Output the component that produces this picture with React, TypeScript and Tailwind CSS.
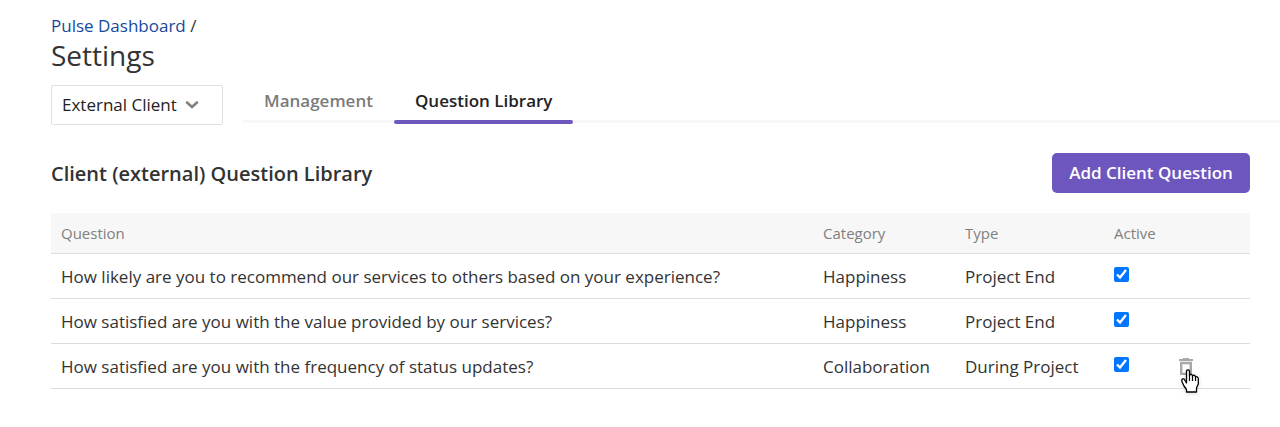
import { useState } from "react";

type Question = {
  id: number;
  text: string;
  category: string;
  type: string;
  removable?: boolean;
};

const QUESTIONS: Question[] = [
  {
    id: 1,
    text: "How likely are you to recommend our services to others based on your experience?",
    category: "Happiness",
    type: "Project End",
  },
  {
    id: 2,
    text: "How satisfied are you with the value provided by our services?",
    category: "Happiness",
    type: "Project End",
  },
  {
    id: 3,
    text: "How satisfied are you with the frequency of status updates?",
    category: "Collaboration",
    type: "During Project",
    removable: true,
  },
];

function TrashIcon() {
  return (
    <svg viewBox="0 0 14 17" className="h-[17px] w-[14px]" aria-hidden="true">
      <path d="M4 0h6v1h4v2H0V1h4z" fill="#a8a8a8" />
      <path d="M2.200 5h9.600v11H2.200z" fill="none" stroke="#a8a8a8" strokeWidth="2.400" />
    </svg>
  );
}

function HandCursor() {
  return (
    <svg
      viewBox="0 0 18 24"
      className="pointer-events-none absolute top-[11px] left-0.5 h-6 w-[18px] drop-shadow-sm"
      aria-hidden="true"
    >
      <path
        d="M5.500 14V2.500Q5.500 .8 7 .8t1.500 1.700V6.500Q9.500 5 10.500 5.500T11.500 7Q12.500 5.800 13.500 6.300T14.500 8Q15.500 7.300 16.400 8T17.300 10V15L15.500 19V23H5.500V20.500L3 17L.9 12.500Q.5 10 2 9.800T4 11.500Z"
        fill="#fff"
        stroke="#000"
        strokeWidth="1.300"
        strokeLinejoin="round"
      />
      <path d="M8.500 6v6M11.500 7v5M14.500 8v4" fill="none" stroke="#000" strokeWidth="1.200" />
    </svg>
  );
}

function ClientSelect() {
  return (
    <div className="relative w-[172px] shrink-0">
      <select
        aria-label="Client type"
        className="h-10 w-full appearance-none rounded-xs border border-[#e0e0e0] bg-white px-[10px] text-[#222]"
      >
        <option>External Client</option>
        <option>Internal Client</option>
      </select>
      <svg
        viewBox="0 0 14 8"
        className="pointer-events-none absolute top-4 right-6 h-2 w-[14px]"
        aria-hidden="true"
      >
        <path d="M2 1.500l5 4.500 5-4.500" fill="none" stroke="#808080" strokeWidth="2.600" strokeLinecap="round" />
      </svg>
    </div>
  );
}

function Tabs() {
  return (
    <nav className="ml-5 flex h-[38px] flex-1 border-b-3 border-[#f7f7f7] font-semibold">
      <button className="h-[39px] px-[21px] pb-2 text-[#7b7b7b]">Management</button>
      <button className="relative h-[39px] px-[21px] pb-2 text-[#222]">
        Question Library
        <span className="absolute inset-x-0 bottom-0 h-1 rounded-full bg-[#6e56bf]" />
      </button>
    </nav>
  );
}

export default function App() {
  const [inactive, setInactive] = useState<number[]>([]);

  function toggle(id: number) {
    setInactive((ids) => (ids.includes(id) ? ids.filter((i) => i !== id) : [...ids, id]));
  }

  return (
    <div className="bg-white pt-3 pb-9 pl-[51px] font-['Open_Sans',sans-serif] text-[17px] text-[#333]">
      <div className="leading-7">
        <a href="#" className="text-[#164a9c]">Pulse Dashboard</a> /
      </div>
      <h1 className="text-[28px] leading-[30px]">Settings</h1>

      <div className="mt-[15px] flex items-start">
        <ClientSelect />
        <Tabs />
      </div>

      <main className="pr-[30px]">
        <div className="mt-7 flex items-center justify-between">
          <h2 className="pt-0.5 text-[20px] font-semibold">Client (external) Question Library</h2>
          <button className="h-10 w-[198px] rounded-[5px] bg-[#6e56bf] font-semibold whitespace-nowrap text-white">
            Add Client Question
          </button>
        </div>

        <table className="mt-5 w-full table-fixed border-collapse text-left">
          <colgroup>
            <col />
            <col className="w-[142px]" />
            <col className="w-[149px]" />
            <col className="w-[65px]" />
            <col className="w-[81px]" />
          </colgroup>
          <thead>
            <tr className="h-10 border-b border-[#dcdcdc] bg-[#f7f7f7] text-[15px] text-[#808080]">
              <th className="px-[10px] font-normal">Question</th>
              <th className="px-[10px] font-normal">Category</th>
              <th className="px-[10px] font-normal">Type</th>
              <th className="px-[10px] font-normal">Active</th>
              <td />
            </tr>
          </thead>
          <tbody>
            {QUESTIONS.map((q) => (
              <tr key={q.id} className="h-[45px] border-b border-[#dcdcdc] whitespace-nowrap">
                <td className="px-[10px] pt-0.5">{q.text}</td>
                <td className="px-[10px] pt-0.5">{q.category}</td>
                <td className="px-[10px] pt-0.5">{q.type}</td>
                <td className="px-[10px] pb-0.5">
                  <input
                    type="checkbox"
                    aria-label={`Active: ${q.text}`}
                    checked={!inactive.includes(q.id)}
                    onChange={() => toggle(q.id)}
                    className="block size-[15px] accent-[#0075ff]"
                  />
                </td>
                <td className="px-[10px] pt-0.5">
                  {q.removable && (
                    <button aria-label="Delete question" className="relative block cursor-pointer">
                      <TrashIcon />
                      <HandCursor />
                    </button>
                  )}
                </td>
              </tr>
            ))}
          </tbody>
        </table>
      </main>
    </div>
  );
}
